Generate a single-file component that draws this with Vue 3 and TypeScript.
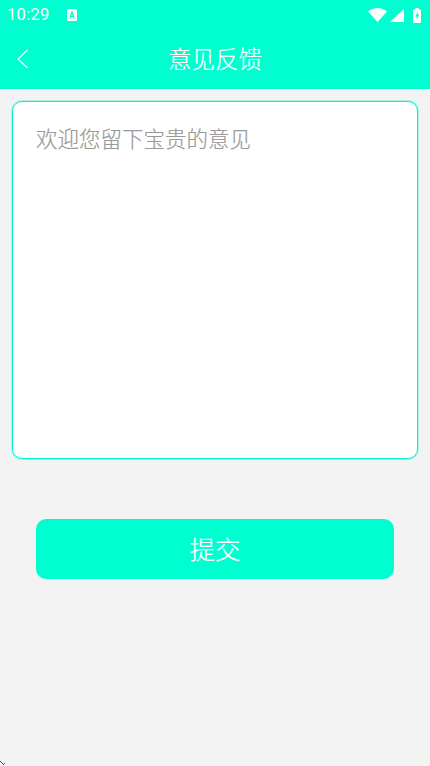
<script setup lang="ts">
const title = '意见反馈'
const placeholder = '欢迎您留下宝贵的意见'
const submit = '提交'
</script>

<template>
  <div class="page">
    <header class="head">
      <div class="status">
        <div class="status-left">
          <span class="time">10:29</span>
          <svg class="a-icon" width="10" height="12" viewBox="0 0 11 12" preserveAspectRatio="none">
            <path fill="#fff" fill-rule="evenodd" d="M1.500 0h8A1.500 1.500 0 0 1 11 1.500v9a1.500 1.500 0 0 1-1.500 1.500h-8A1.500 1.500 0 0 1 0 10.500v-9A1.500 1.500 0 0 1 1.500 0ZM4.600 2.500 2.500 9.500h1.500l.4-1.500h2.200l.4 1.500h1.500L6.400 2.500H4.600Zm.9 1.800.7 2.500H4.800l.7-2.500Z"/>
          </svg>
        </div>
        <div class="status-right">
          <svg class="wifi" width="19" height="14" viewBox="0 0 19 14"><path fill="#fff" d="M0 3.400C2.600 1.300 5.900 0 9.500 0s6.900 1.300 9.500 3.400L9.500 14 0 3.400Z"/></svg>
          <svg class="signal" width="14" height="13" viewBox="0 0 14 13"><path fill="#fff" d="M14 0v13H0L14 0Z"/></svg>
          <svg class="battery" width="8" height="15" viewBox="0 0 8 15"><path fill="#fff" fill-rule="evenodd" d="M2.500 0h3v1.500H7a1 1 0 0 1 1 1V14a1 1 0 0 1-1 1H1a1 1 0 0 1-1-1V2.500a1 1 0 0 1 1-1h1.500V0ZM4.900 3.800 2.200 8.600h1.500v3l2.700-4.800H4.900v-3Z"/></svg>
        </div>
      </div>
      <div class="nav">
        <svg class="back" width="14" height="22" viewBox="0 0 14 22">
          <path d="M12.500 2 3 11l9.500 9" fill="none" stroke="#e8fffa" stroke-width="1.200"/>
        </svg>
        <h1 class="title">{{ title }}</h1>
      </div>
    </header>
    <main class="body">
      <div class="box"><span class="placeholder">{{ placeholder }}</span></div>
      <button class="btn" type="button">{{ submit }}</button>
    </main>
    <svg class="corner" width="8" height="6" viewBox="0 0 8 6"><path d="M0 1l3 3M3 5l2-2" stroke="#555" stroke-width="1" fill="none"/></svg>
  </div>
</template>

<style>
html, body { margin: 0; padding: 0; background: #f3f3f3; }
</style>

<style scoped>
.page {
  position: relative;
  width: 430px;
  height: 766px;
  background: #f3f3f3;
  overflow: hidden;
  font-family: "Noto Sans CJK SC", "Roboto", sans-serif;
}
.head { background: #00ffd0; height: 89px; }
.status {
  height: 30px;
  display: flex;
  align-items: center;
  justify-content: space-between;
  padding: 0 9px 0 7px;
  color: #fff;
}
.status-left { display: flex; align-items: center; gap: 17px; }
.status-right { display: flex; align-items: center; gap: 3px; }
.battery { margin-left: 6px; }
.time { font-family: Roboto, sans-serif; font-size: 16.500px; line-height: 20px; letter-spacing: 0.300px; }
.nav { position: relative; height: 58px; display: flex; align-items: center; justify-content: center; }
.back { position: absolute; left: 15px; top: 18px; }
.title { margin: 0; font-size: 23.500px; font-weight: 300; color: #fff; line-height: 32px; position: relative; top: -1px; -webkit-text-stroke: 0.2px #fff; }
.body { padding: 12px 12px 0; display: flex; flex-direction: column; align-items: center; }
.box {
  box-sizing: border-box;
  width: 406px;
  height: 358px;
  background: #fff;
  border: 1px solid #00f5cf;
  box-shadow: 0 0 0 1px rgba(0, 255, 208, 0.3);
  border-radius: 10px;
  padding: 20px 23px;
}
.placeholder { font-size: 21.500px; font-weight: 300; line-height: 32px; color: #999; display: block; -webkit-text-stroke: 0.2px #999; }
.btn {
  margin-top: 60px;
  width: 358px;
  height: 60px;
  border: none;
  border-radius: 10px;
  background: #00ffd0;
  color: #fff;
  font-family: inherit;
  font-size: 25.500px;
  font-weight: 300;
  line-height: 58px;
  padding: 0 0 2px;
  -webkit-text-stroke: 0.2px #fff;
}
.corner { position: absolute; left: 0; bottom: 0; }
</style>
